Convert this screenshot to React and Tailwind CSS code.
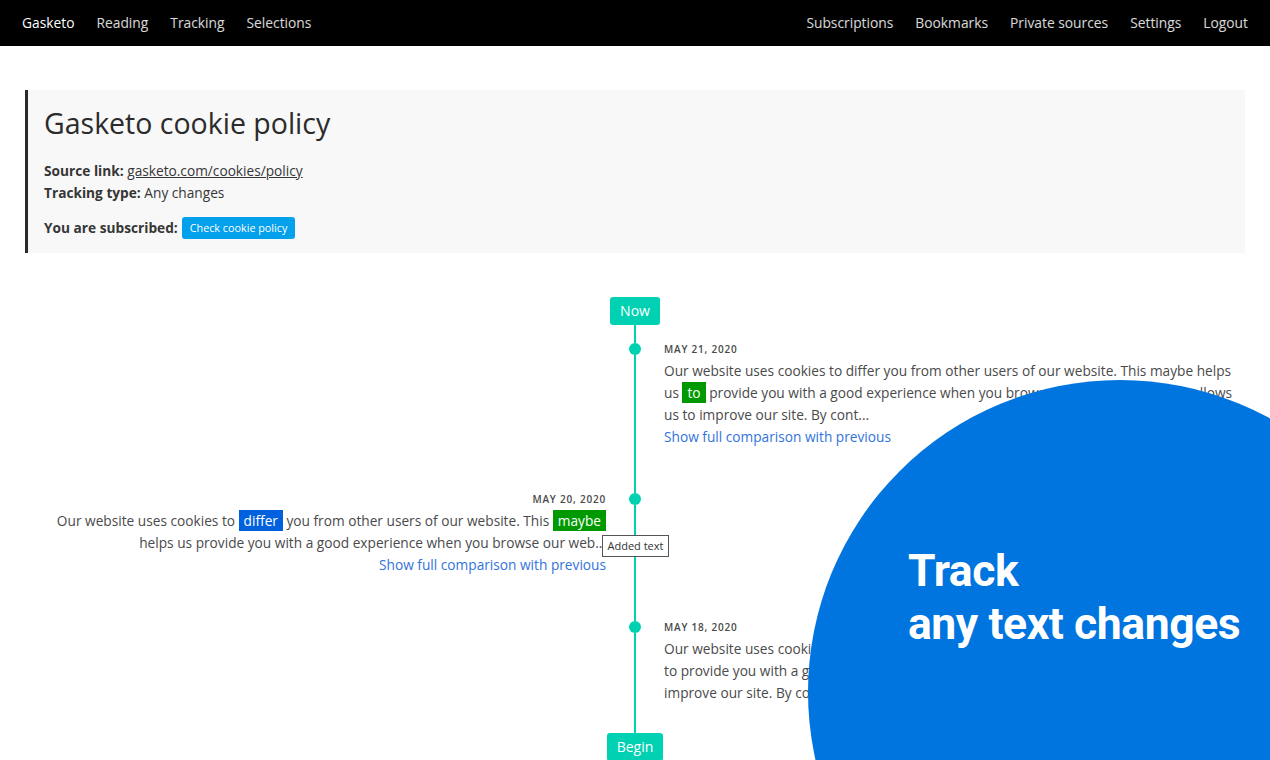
import React from 'react';

const font = { fontFamily: '"Open Sans", "Noto Sans", sans-serif' };

function Added({ children }) {
  return <span className="bg-[#009a00] text-white px-[5px] py-[1px]">{children}</span>;
}

function Changed({ children }) {
  return <span className="bg-[#0061de] text-white px-[5px] py-[1px]">{children}</span>;
}

function DateLabel({ children }) {
  return (
    <p className="text-[10px] leading-[14px] font-semibold tracking-[0.08em] uppercase text-[#4a4a4a]">
      {children}
    </p>
  );
}

function Spine({ pt, children }) {
  return (
    <div className="relative flex flex-col items-center">
      <div className="w-[2px] bg-[#00d1b2]" style={{ height: pt + 1 }} />
      <div className="w-3 h-3 rounded-full bg-[#00d1b2]" />
      <div className="w-[2px] flex-1 bg-[#00d1b2]" />
      {children}
    </div>
  );
}

export default function App() {
  const nav = ['Reading', 'Tracking', 'Selections'];
  const navRight = ['Subscriptions', 'Bookmarks', 'Private sources', 'Settings', 'Logout'];

  return (
    <div className="relative h-[760px] overflow-hidden bg-white text-[#363636]" style={font}>
      <nav className="h-[46px] bg-black flex items-center justify-between px-[22px] text-[13.8px]">
        <div className="flex items-center gap-[22px]">
          <span className="text-white">Gasketo</span>
          {nav.map(n => <span key={n} className="text-white/85">{n}</span>)}
        </div>
        <div className="flex items-center gap-[22px]">
          {navRight.map(n => <span key={n} className="text-white/85">{n}</span>)}
        </div>
      </nav>

      <div className="px-[25px] pt-[44px]">
        <div className="h-[163px] bg-[#f8f8f8] border-l-[3px] border-[#2a2a2a] pl-[16px] pt-[14px]">
          <h1 className="text-[28.5px] leading-[38px] text-[#2b2b2b]">Gasketo cookie policy</h1>
          <div className="mt-[18px] text-[13.7px] leading-[22px]">
            <p><b className="font-bold">Source link:</b> <span className="underline">gasketo.com/cookies/policy</span></p>
            <p><b className="font-bold">Tracking type:</b> Any changes</p>
            <p className="mt-[13px] flex items-center gap-[4px]">
              <b className="font-bold">You are subscribed:</b>
              <span className="bg-[#03a0ec] text-white text-[10.8px] leading-[22px] px-[8px] rounded-[3px]">Check cookie policy</span>
            </p>
          </div>
        </div>

        <div className="pt-[44px] flex flex-col text-[13.7px] leading-[22px] text-[#4a4a4a]">
          <div className="flex justify-center">
            <span className="bg-[#00d1b2] text-white text-[14px] leading-[28px] px-[10px] rounded-[3px]">Now</span>
          </div>

          <div className="grid grid-cols-[1fr_58px_1fr]">
            <div />
            <Spine pt={17} />
            <div className="pt-[17px]">
              <DateLabel>May 21, 2020</DateLabel>
              <p className="mt-[4px] pr-[6px]">
                Our website uses cookies to differ you from other users of our website. This maybe helps us <Added>to</Added> provide you with a good experience when you browse our website and also allows us to improve our site. By cont...
              </p>
              <a className="text-[#3273dc]">Show full comparison with previous</a>
            </div>
          </div>

          <div className="grid grid-cols-[1fr_58px_1fr]">
            <div className="pt-[44px] text-right pl-[30px]">
              <DateLabel>May 20, 2020</DateLabel>
              <p className="mt-[4px]">
                Our website uses cookies to <Changed>differ</Changed> you from other users of our website. This <Added>maybe</Added> helps us provide you with a good experience when you browse our web...
              </p>
              <a className="text-[#3273dc]">Show full comparison with previous</a>
            </div>
            <Spine pt={44}>
              <span className="absolute left-[-4px] top-[87px] h-[22px] w-[67px] bg-white border border-[#555] text-[11px] leading-[20px] text-[#333] text-center">
                Added text
              </span>
            </Spine>
            <div />
          </div>

          <div className="grid grid-cols-[1fr_58px_1fr]">
            <div />
            <Spine pt={44} />
            <div className="pt-[44px] pb-[29px]">
              <DateLabel>May 18, 2020</DateLabel>
              <p className="mt-[4px] pr-[6px]">
                Our website uses cookies to differ you from other users of our website. This helps us<br />
                to provide you with a good experience when you browse our website and also allows us to improve our site. By cont...
              </p>
            </div>
          </div>

          <div className="flex justify-center">
            <span className="bg-[#00d1b2] text-white text-[14px] leading-[28px] px-[10px] rounded-[3px]">Begin</span>
          </div>
        </div>
      </div>

      <div className="absolute left-[808px] top-[380px] w-[624px] h-[624px] rounded-full bg-[#0074df]" />
      <div
        className="absolute left-[908px] top-[545px] text-white font-bold text-[44.5px] leading-[53px] tracking-[-0.01em]"
        style={{ fontFamily: 'Roboto, "Noto Sans", sans-serif' }}
      >
        <p>Track</p>
        <p>any text changes</p>
      </div>
    </div>
  );
}
